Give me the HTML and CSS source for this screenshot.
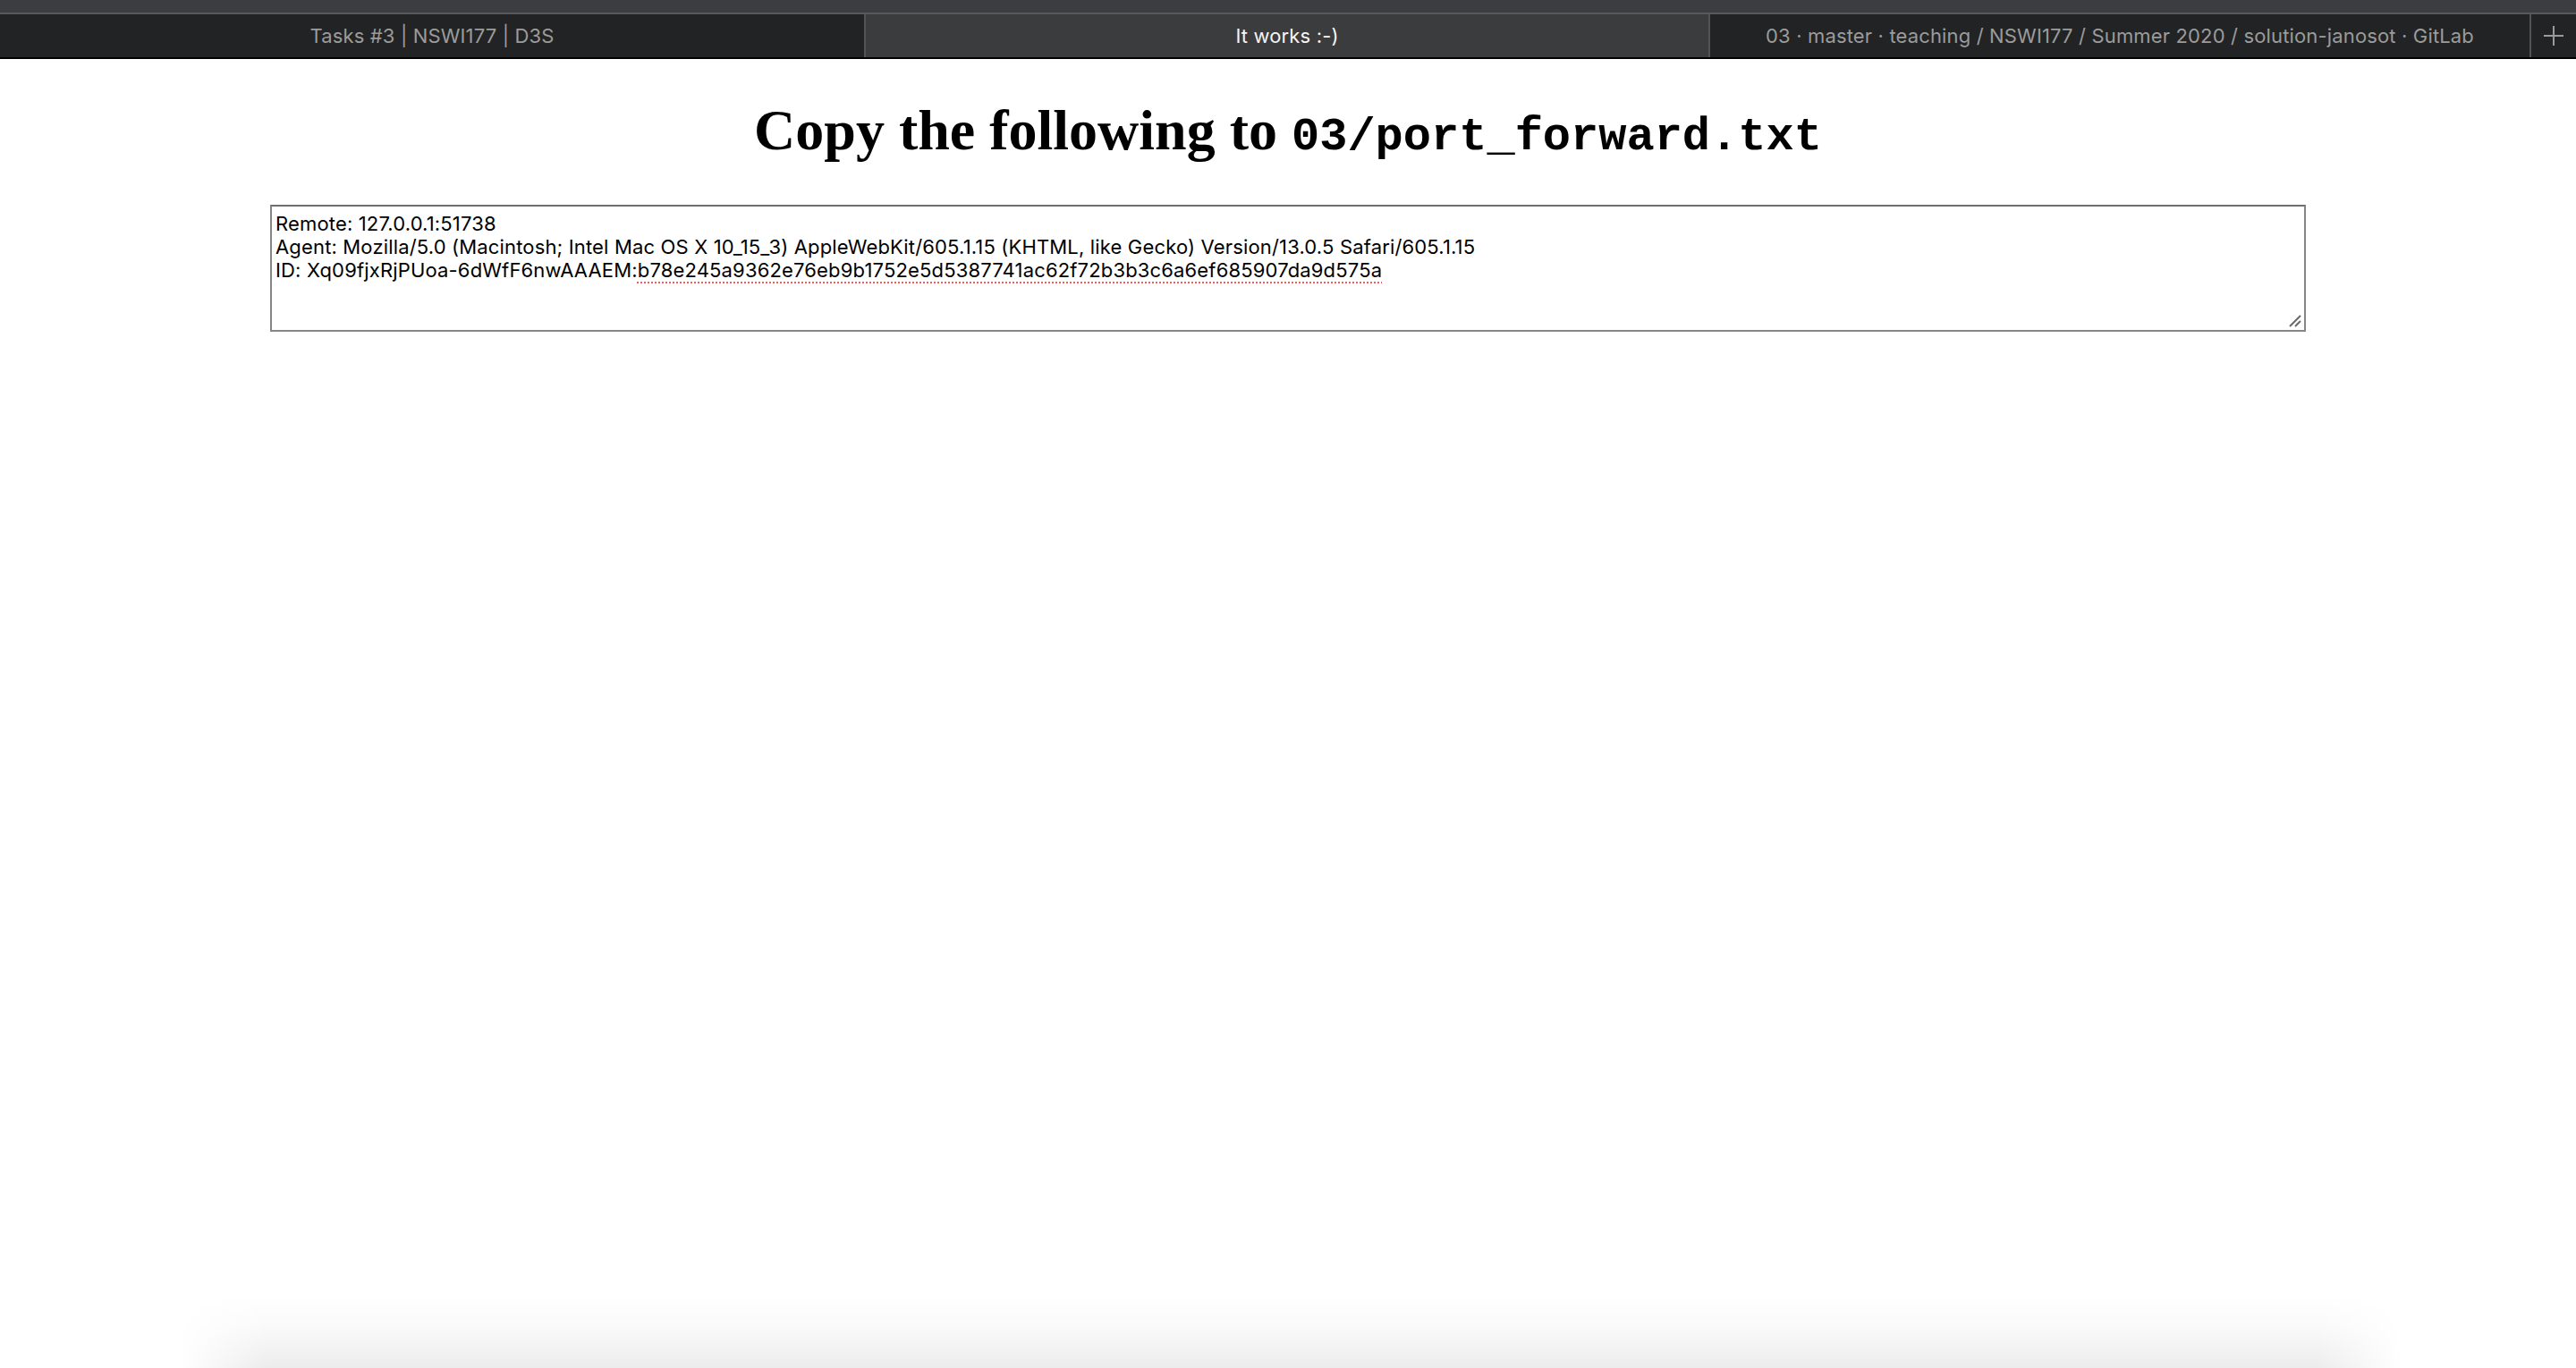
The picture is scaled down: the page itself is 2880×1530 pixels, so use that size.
FILE: index.html
```html
<!DOCTYPE html>
<html lang="en">
<head>
<meta charset="utf-8">
<title>It works :-)</title>
<link rel="stylesheet" href="styles.css">
</head>
<body>
<header class="chrome">
  <div class="strip"></div>
  <nav class="tabs">
    <div class="tab">Tasks #3 | NSWI177 | D3S</div>
    <div class="tab active">It works :-)</div>
    <div class="tab">03 · master · teaching / NSWI177 / Summer 2020 / solution-janosot · GitLab</div>
    <div class="newtab">
      <svg width="24" height="24" viewBox="0 0 24 24"><path d="M12 1V23M1 12H23" stroke="#9a9a9a" stroke-width="2" fill="none"/></svg>
    </div>
  </nav>
</header>
<main class="page">
  <h1>Copy the following to <code>03/port_forward.txt</code></h1>
  <div class="box">
    <div class="line">Remote: 127.0.0.1:51738</div>
    <div class="line">Agent: Mozilla/5.0 (Macintosh; Intel Mac OS X 10_15_3) AppleWebKit/605.1.15 (KHTML, like Gecko) Version/13.0.5 Safari/605.1.15</div>
    <div class="line">ID: Xq09fjxRjPUoa-6dWfF6nwAAAEM:<span class="misspelled">b78e245a9362e76eb9b1752e5d5387741ac62f72b3b3c6a6ef685907da9d575a</span></div>
    <svg class="grip" width="16" height="16" viewBox="0 0 16 16"><path d="M15 3L3 15M15 9L9 15" stroke="#6a6a6a" stroke-width="2" fill="none"/></svg>
  </div>
</main>
<div class="shadow"></div>
</body>
</html>
```

FILE: styles.css
```css
html, body {
  margin: 0;
  padding: 0;
  background: #ffffff;
}

.chrome {
  font-family: "Inter", "Noto Sans", sans-serif;
}

.strip {
  height: 14px;
  background: #3c3d40;
  border-bottom: 2px solid #58595b;
}

.tabs {
  display: grid;
  grid-template-columns: 966px 944px 918px 1fr;
  height: 48px;
  background: #222324;
  border-bottom: 2px solid #000000;
}

.tab {
  display: flex;
  align-items: center;
  justify-content: center;
  font-size: 22px;
  letter-spacing: 0.15px;
  color: #9b9b9b;
  white-space: nowrap;
  overflow: hidden;
}

.tab + .tab,
.newtab {
  border-left: 2px solid #525355;
}

.tab.active {
  background: #3b3c3e;
  color: #f4f4f4;
}

.newtab {
  display: flex;
  align-items: center;
  justify-content: center;
}

.page {
  padding: 0 16px;
}

h1 {
  margin: 43px 0 46px;
  text-align: center;
  font-family: "Liberation Serif", "Times New Roman", serif;
  font-weight: bold;
  font-size: 64px;
  color: #000000;
}

h1 code {
  font-family: "Liberation Mono", "Courier New", monospace;
  font-weight: bold;
  font-size: 52px;
}

.box {
  position: relative;
  box-sizing: border-box;
  width: 2276px;
  height: 142px;
  margin: 0 auto;
  padding: 6px 4px 2px;
  border: 2px solid #868686;
  border-top-color: #6e6e6e;
  font-family: "Inter", "Noto Sans", sans-serif;
  font-size: 22px;
  letter-spacing: 0.16px;
  line-height: 26px;
  color: #000000;
}

.line {
  white-space: nowrap;
}

.misspelled {
  text-decoration: underline dotted #f25b5b;
  text-decoration-thickness: 2px;
  text-underline-offset: 5px;
}

.grip {
  position: absolute;
  right: 3px;
  bottom: 3px;
}

.shadow {
  position: fixed;
  left: 0;
  right: 0;
  bottom: 0;
  height: 80px;
  pointer-events: none;
  background: linear-gradient(to bottom, rgba(0, 0, 0, 0), rgba(0, 0, 0, 0.02) 40%, rgba(0, 0, 0, 0.075));
  -webkit-mask-image: linear-gradient(to right, transparent 200px, #000 300px, #000 2590px, transparent 2685px);
  mask-image: linear-gradient(to right, transparent 200px, #000 300px, #000 2590px, transparent 2685px);
}
```
